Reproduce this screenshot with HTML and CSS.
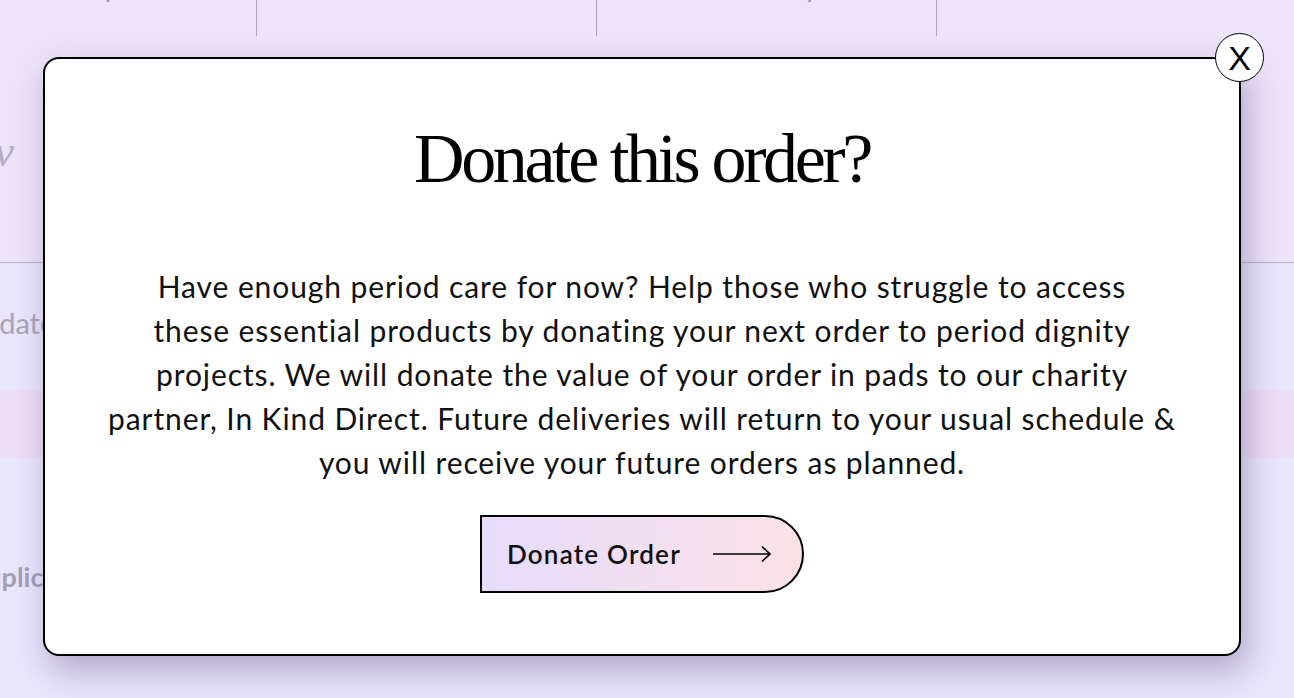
FILE: index.html
```html
<!DOCTYPE html>
<html lang="en">
<head>
<meta charset="utf-8">
<title>Donate this order?</title>
<link rel="stylesheet" href="styles.css">
</head>
<body>
<div class="page">
  <header class="top-panel">
    <nav class="tabs">
      <div class="tab tab-first">Shop</div>
      <div class="tab">Orders</div>
      <div class="tab tab-third">Delivery</div>
      <div class="tab tab-last">Account</div>
    </nav>
    <div class="hero"><span class="hero-title">Your delivery summary v</span></div>
  </header>
  <section class="row date-row"><span class="date-text">Update</span></section>
  <div class="band"></div>
  <section class="row apply-row"><span class="apply-text">Duplicate</span></section>
</div>

<div class="modal" role="dialog" aria-labelledby="modal-title">
  <button class="close" aria-label="Close">X</button>
  <h1 class="modal-title" id="modal-title">Donate this order?</h1>
  <p class="modal-text">Have enough period care for now? Help those who struggle to access<br>these essential products by donating your next order to period dignity<br>projects. We will donate the value of your order in pads to our charity<br>partner, In Kind Direct. Future deliveries will return to your usual schedule &amp;<br>you will receive your future orders as planned.</p>
  <button class="donate-btn">
    <span>Donate Order</span>
    <svg class="arrow" width="60" height="18" viewBox="0 0 60 18" aria-hidden="true">
      <path d="M1 9 H58 M50 1.5 L58 9 L50 16.5" fill="none" stroke="#000" stroke-width="1.6" stroke-linejoin="miter"/>
    </svg>
  </button>
</div>
</body>
</html>
```
FILE: styles.css
```css
html, body {
  margin: 0;
  padding: 0;
}
body {
  width: 1294px;
  height: 698px;
  overflow: hidden;
  background: #e9e5fb;
  font-family: Lato, "Noto Sans", sans-serif;
  position: relative;
}
.page {
  display: flex;
  flex-direction: column;
}
.top-panel {
  height: 262px;
  background: #ece3f9;
  border-bottom: 1px solid #b8b0c6;
  display: flex;
  flex-direction: column;
}
.tabs {
  display: flex;
  height: 36px;
  overflow: hidden;
}
.tab {
  width: 340px;
  height: 66px;
  flex: none;
  border-left: 1px solid #aaa3b8;
  box-sizing: border-box;
  color: #9d97ab;
  font-size: 30px;
  line-height: 30px;
  display: flex;
  justify-content: center;
  align-items: flex-start;
  transform: translateY(-30px);
}
.tab-first {
  width: 256px;
  border-left: none;
  padding-right: 80px;
}
.tab-third { padding-right: 4px; }
.tab-last { flex: 1; }
.hero {
  width: 14px;
  display: flex;
  justify-content: flex-end;
  margin-top: 94px;
  white-space: nowrap;
}
.hero-title {
  font-family: "Liberation Serif", serif;
  font-style: italic;
  font-size: 44px;
  color: #b4acc2;
  line-height: 44px;
}
.row {
  display: flex;
  align-items: center;
  white-space: nowrap;
}
.date-row {
  height: 128px;
}
.date-text {
  font-size: 29px;
  color: #aaa4b8;
  margin-left: -38px;
  margin-top: -10px;
}
.band {
  height: 66px;
  background: #ecdcf4;
}
.apply-row {
  height: 240px;
  align-items: flex-start;
}
.apply-text {
  font-size: 27px;
  font-weight: 700;
  color: #a49eb2;
  margin-left: -34px;
  margin-top: 103px;
}

/* Modal */
.modal {
  position: absolute;
  left: 43px;
  top: 57px;
  width: 1198px;
  height: 599px;
  box-sizing: border-box;
  background: #fff;
  border: 2px solid #000;
  border-radius: 16px;
  box-shadow: 6px 14px 32px rgba(70, 50, 110, 0.35);
  display: flex;
  flex-direction: column;
  align-items: center;
  padding-top: 65px;
}
.close {
  position: absolute;
  right: -25px;
  top: -26px;
  width: 49px;
  height: 49px;
  border-radius: 50%;
  border: 1.5px solid #000;
  background: #fff;
  padding: 0;
  font-family: "Liberation Sans", sans-serif;
  font-size: 34px;
  line-height: 1;
  color: #000;
  display: flex;
  align-items: center;
  justify-content: center;
  cursor: pointer;
}
.modal-title {
  margin: 0;
  font-family: "Liberation Serif", serif;
  font-weight: 400;
  font-size: 70px;
  line-height: 70px;
  letter-spacing: -3.4px;
  color: #000;
}
.modal-text {
  margin: 70px 0 0;
  font-size: 30px;
  line-height: 44px;
  letter-spacing: 0.9px;
  text-align: center;
  color: #111;
  white-space: nowrap;
}
.donate-btn {
  margin-top: 31px;
  width: 324px;
  height: 78px;
  box-sizing: border-box;
  border: 2px solid #000;
  border-radius: 0 40px 40px 0;
  background: linear-gradient(90deg, #e6dcfb 0%, #fbe1e6 100%);
  display: flex;
  align-items: center;
  justify-content: space-between;
  padding: 0 30px 0 25px;
  font-family: Lato, sans-serif;
  font-size: 26px;
  font-weight: 600;
  letter-spacing: 1.2px;
  color: #111;
  cursor: pointer;
}
.arrow { display: block; }
```
